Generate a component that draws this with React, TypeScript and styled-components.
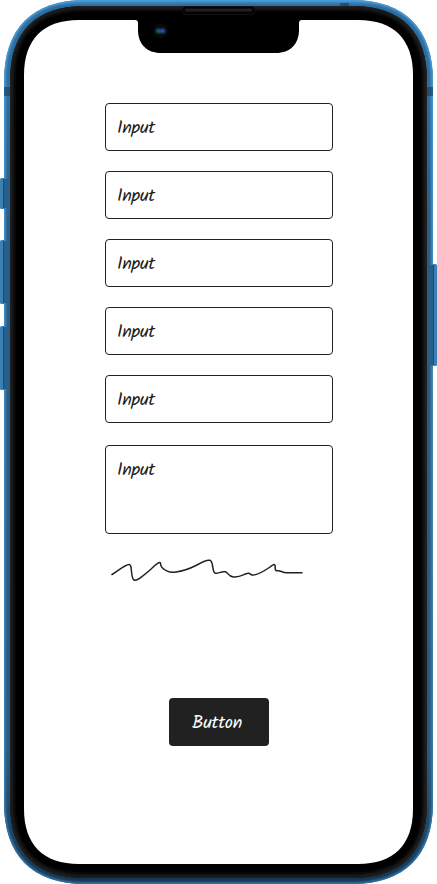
import React from "react";
import styled, { createGlobalStyle } from "styled-components";

const GlobalStyle = createGlobalStyle`
  * { box-sizing: border-box; }
  body { margin: 0; background: #fff; }
`;

const Device = styled.main`
  position: relative;
  width: 437px;
  height: 884px;
  overflow: hidden;
  font-family: Kalam, "Open Sans", "Noto Sans", sans-serif;
`;

const FrameArt = styled.svg`
  position: absolute;
  inset: 0;
  display: block;
`;

const Screen = styled.form`
  position: relative;
  display: flex;
  flex-direction: column;
  align-items: center;
  padding-top: 103px;
`;

const Fields = styled.div`
  display: flex;
  flex-direction: column;
  gap: 20px;
  width: 228px;
`;

const Field = styled.div<{ $tall?: boolean }>`
  height: ${(p) => (p.$tall ? 89 : 48)}px;
  margin-top: ${(p) => (p.$tall ? 2 : 0)}px;
  padding: 13px 11.5px 9px;
  border: 1px solid #212121;
  border-radius: 4px;
  color: #212121;
  line-height: 24px;
`;

const Label = styled.span`
  font-size: 18px;
  font-weight: 400;
  letter-spacing: -0.3px;
  white-space: nowrap;
`;

const Signature = styled.svg`
  display: block;
  margin-top: 16px;
`;

const Submit = styled.button`
  display: flex;
  align-items: center;
  justify-content: center;
  width: 100px;
  height: 48px;
  margin-top: 108px;
  padding: 3px 3px 0 0;
  border: 0;
  border-radius: 4px;
  background: #212121;
  color: #fff;
  font: inherit;
  line-height: 24px;
`;

/* Rounded rectangle whose corners ease in gradually; c is the corner reach. */
function squircle(l: number, t: number, r: number, b: number, c: number) {
  const k = c * 0.35;
  return `M${l} ${t + c}C${l} ${t + k} ${l + k} ${t} ${l + c} ${t}H${r - c}C${r - k} ${t} ${r} ${t + k} ${r} ${t + c}V${b - c}C${r} ${b - k} ${r - k} ${b} ${r - c} ${b}H${l + c}C${l + k} ${b} ${l} ${b - k} ${l} ${b - c}Z`;
}

const shell = squircle(4, 0, 433, 884, 81);
const bezel = squircle(10, 6, 427, 878, 74);
const display = squircle(24, 20, 413, 864, 55);

const sideButtons = [
  { x: 0, y: 178, h: 31 },
  { x: 0, y: 240, h: 64 },
  { x: 0, y: 326, h: 64 },
  { x: 432, y: 264, h: 102 },
];

function PhoneFrame() {
  return (
    <FrameArt width="437" height="884" viewBox="0 0 437 884" aria-hidden="true">
      <defs>
        <linearGradient id="metal" x2="0" y2="1">
          <stop offset="0" stopColor="#3b86bf" />
          <stop offset=".007" stopColor="#2b6b9c" />
          <stop offset=".1" stopColor="#2e6d9f" />
          <stop offset=".25" stopColor="#285d87" />
          <stop offset=".85" stopColor="#28597f" />
          <stop offset="1" stopColor="#17364f" />
        </linearGradient>
        <linearGradient id="rim" x2="0" y2="1">
          <stop offset="0" stopColor="#4d9fdc" />
          <stop offset=".8" stopColor="#3d83b9" />
          <stop offset="1" stopColor="#3679ad" />
        </linearGradient>
        <filter id="soft"><feGaussianBlur stdDeviation=".8" /></filter>
        <filter id="glow" x="-1" y="-1" width="3" height="3"><feGaussianBlur stdDeviation=".8" /></filter>
        <filter id="shade"><feGaussianBlur stdDeviation="2.2" /></filter>
        <clipPath id="shellClip"><path d={shell} /></clipPath>
        <clipPath id="bezelClip"><path d={bezel} /></clipPath>
      </defs>
      <path d={shell} fill="url(#metal)" />
      <g clipPath="url(#shellClip)">
        <path d={shell} fill="none" stroke="url(#rim)" strokeWidth="3.4" filter="url(#soft)" />
        <path d="M4 87h6v9H4zM427 87h6v9h-6zM340 3h9v3h-9z" fill="#173f60" opacity=".65" />
      </g>
      {sideButtons.map((b) => (
        <g key={b.y}>
          <rect x={b.x} y={b.y} width="5" height={b.h} rx="1.5" fill="#3a80b5" />
          <path d={b.x ? `M428 ${b.y + 1}h5v${b.h - 2}h-5z` : `M4 ${b.y + 1}h5v${b.h - 2}h-5z`} fill="#285f8a" />
          <path d={`M${b.x ? 433.5 : 3.5} ${b.y + 1}v${b.h - 2}`} stroke="#214c70" />
        </g>
      ))}
      <path d={bezel} fill="#000" />
      <g clipPath="url(#bezelClip)">
        <path d={bezel} fill="none" stroke="#202020" strokeWidth="7" filter="url(#shade)" />
      </g>
      <path d={display} fill="#fff" />
      <path d="M135 19.5h167v.5c-2 0-3 1-3 3v7c0 14-9 23-23 23H161c-14 0-23-9-23-23v-7c0-2-1-3-3-3z" fill="#000" />
      <rect x="182.5" y="6.5" width="72" height="8" rx="3" fill="#030303" stroke="#111" />
      <rect x="185" y="8.5" width="67" height="3" rx="1" fill="#202020" />
      <circle cx="160.5" cy="31" r="7.5" fill="#080808" />
      <g filter="url(#glow)">
        <circle cx="158.3" cy="31" r="2.4" fill="#20657a" />
        <circle cx="162.7" cy="31" r="2.4" fill="#3157c8" />
      </g>
    </FrameArt>
  );
}

export default function App() {
  return (
    <Device>
      <GlobalStyle />
      <PhoneFrame />
      <Screen>
        <Fields>
          {[0, 1, 2, 3, 4].map((i) => (
            <Field key={i}><Label>Input</Label></Field>
          ))}
          <Field $tall><Label>Input</Label></Field>
        </Fields>
        <Signature width="237" height="40" viewBox="0 0 237 40" aria-label="Signature">
          <path
            d="M12 24.5C17 21.5 21 18 25 16C29 13.8 30.4 13.8 31 17C31.8 24 31.8 29 34 30C37 31.7 44 25 50 20C54 16.5 57 13 59.3 12.5C61.5 12 59.5 15 62 17.5C66 21.5 71 22.8 76 22C84 21 89 19 96 15.5C102 12 106.500 9.500 110 10.300C113.500 11 112 21.500 114.800 23C118 24.500 120.500 20.800 125.500 21.800C128 22.300 128 26.500 133.500 27C139 27.500 142 25.500 146 23.800C150.500 21.600 150 25.300 153 25.100C159 24.600 165 20.500 170 17C173 14.700 174.500 13.500 175 15.500C175.600 18 174.500 20.800 177 20.700C181.500 20.200 181 22.600 187 22.800H202"
            fill="none" stroke="#212121" strokeWidth="1.5" strokeLinecap="round" strokeLinejoin="round"
          />
        </Signature>
        <Submit type="button"><Label>Button</Label></Submit>
      </Screen>
    </Device>
  );
}
